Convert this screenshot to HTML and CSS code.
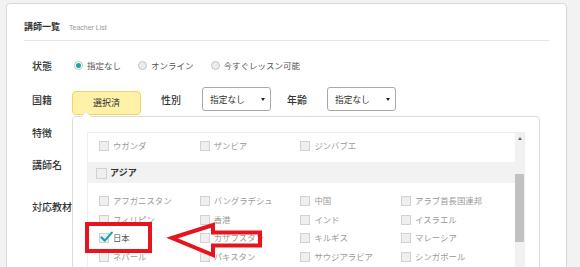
FILE: index.html
```html
<!DOCTYPE html>
<html lang="ja">
<head>
    <meta charset="UTF-8">
    <meta name="viewport" content="width=device-width, initial-scale=1.0">
    <title>講師一覧</title>
    <link rel="stylesheet" href="styles.css">
</head>
<body>
    <div class="card">
        <div class="card-head">
            <h1 class="card-title">講師一覧</h1>
            <span class="card-sub">Teacher List</span>
        </div>

        <div class="filters">
            <div class="filter-row row-status">
                <div class="filter-label">状態</div>
                <div class="filter-field">
                    <label class="radio"><span class="radio-dot checked"></span>指定なし</label>
                    <label class="radio"><span class="radio-dot"></span>オンライン</label>
                    <label class="radio"><span class="radio-dot"></span>今すぐレッスン可能</label>
                </div>
            </div>

            <div class="filter-row row-country">
                <div class="filter-label">国籍</div>
                <div class="filter-field">
                    <div class="country-picker">
                        <button type="button" class="picker-btn">選択済</button>

                        <!-- open dropdown -->
                        <div class="picker-panel">
                            <div class="country-list">
                                <div class="country-scroll">
                                    <div class="country-group group-tail">
                                        <label class="country"><span class="check"></span>ウガンダ</label>
                                        <label class="country"><span class="check"></span>ザンビア</label>
                                        <label class="country"><span class="check"></span>ジンバブエ</label>
                                    </div>

                                    <div class="group-head"><span class="check"></span>アジア</div>
                                    <div class="country-group">
                                        <label class="country"><span class="check"></span>アフガニスタン</label>
                                        <label class="country"><span class="check"></span>バングラデシュ</label>
                                        <label class="country"><span class="check"></span>中国</label>
                                        <label class="country"><span class="check"></span>アラブ首長国連邦</label>

                                        <label class="country"><span class="check"></span>フィリピン</label>
                                        <label class="country"><span class="check"></span>香港</label>
                                        <label class="country"><span class="check"></span>インド</label>
                                        <label class="country"><span class="check"></span>イスラエル</label>

                                        <label class="country selected">
                                            <span class="check">
                                                <svg class="tick" viewBox="0 0 13 12" width="13" height="12"><path d="M1.5 6.5 L4.8 9.6 L11.8 1.6" fill="none" stroke="#1c9fb3" stroke-width="2.2" stroke-linecap="round" stroke-linejoin="round"/></svg>
                                            </span>日本
                                        </label>
                                        <label class="country"><span class="check"></span>カザフスタン</label>
                                        <label class="country"><span class="check"></span>キルギス</label>
                                        <label class="country"><span class="check"></span>マレーシア</label>

                                        <label class="country"><span class="check"></span>ネパール</label>
                                        <label class="country"><span class="check"></span>パキスタン</label>
                                        <label class="country"><span class="check"></span>サウジアラビア</label>
                                        <label class="country"><span class="check"></span>シンガポール</label>
                                    </div>
                                </div>
                                <div class="scrollbar">
                                    <span class="scroll-up"></span>
                                    <span class="scroll-thumb"></span>
                                </div>
                            </div>
                        </div>
                    </div>

                    <span class="inline-label">性別</span>
                    <div class="select">指定なし<span class="caret"></span></div>

                    <span class="inline-label">年齢</span>
                    <div class="select">指定なし<span class="caret"></span></div>
                </div>
            </div>

            <div class="filter-row row-feature">
                <div class="filter-label">特徴</div>
            </div>

            <div class="filter-row row-name">
                <div class="filter-label">講師名</div>
            </div>

            <div class="filter-row row-text">
                <div class="filter-label">対応教材</div>
            </div>
        </div>
    </div>

    <!-- red annotation drawn on top of the screenshot -->
    <svg class="annotation" width="580" height="267" viewBox="0 0 580 267">
        <rect x="87" y="224" width="63" height="27" fill="none" stroke="#e8141d" stroke-width="4"/>
        <polygon points="172,238 213,225 213,232.5 260,232.5 260,245.5 213,245.5 213,255" fill="none" stroke="#e8141d" stroke-width="4" stroke-linejoin="miter"/>
    </svg>
</body>
</html>
```

FILE: styles.css
```css
html, body {
    height: 100%;
    overflow: hidden;
}
body {
    margin: 0;
    padding: 3px 13px 0 6px;
    background: #f2f2f2;
    font-family: "Noto Sans CJK JP", sans-serif;
    color: #333;
    position: relative;
}
.card {
    background: #fff;
    border: 1px solid #d9d9d9;
    border-radius: 4px;
    padding: 0 17px;
    min-height: 320px;
}
.card-head {
    display: flex;
    align-items: center;
    padding: 16px 0 6px;
    border-bottom: 1px solid #e6e6e6;
}
.card-title {
    margin: 0;
    font-size: 9px;
    line-height: 14px;
    font-weight: bold;
    color: #333;
}
.card-sub {
    margin-left: 9px;
    font-family: "Liberation Sans", Arial, sans-serif;
    font-size: 7px;
    color: #999;
}

/* filter rows */
.filters {
    display: flex;
    flex-direction: column;
    gap: 9px;
    padding: 11px 0 0 8px;
}
.filter-row {
    display: flex;
    align-items: center;
}
.row-status { height: 26px; }
.row-country { height: 24px; }
.row-feature { height: 24px; }
.row-name { height: 22px; }
.row-text { height: 44px; }
.filter-label {
    width: 40px;
    flex-shrink: 0;
    font-size: 10px;
    font-weight: 500;
    color: #333;
}
.filter-field {
    display: flex;
    align-items: center;
    height: 100%;
}

.radio {
    display: flex;
    align-items: center;
    margin-right: 17px;
    font-size: 8.5px;
    color: #555;
}
.radio:first-child {
    margin-left: 2px;
}
.radio-dot {
    width: 9px;
    height: 9px;
    box-sizing: border-box;
    border: 1px solid #c4c4c4;
    border-radius: 50%;
    background: #ececec;
    margin-right: 4px;
    position: relative;
}
.radio-dot.checked {
    background: #fff;
}
.radio-dot.checked::after {
    content: "";
    position: absolute;
    left: 1px;
    top: 1px;
    width: 5px;
    height: 5px;
    border-radius: 50%;
    background: #17a3ab;
}

/* country picker */
.country-picker {
    position: relative;
    height: 24px;
}
.picker-btn {
    width: 69px;
    height: 24px;
    padding: 0;
    background: #fff2a8;
    border: 1px solid #f1d467;
    border-radius: 4px;
    font-family: inherit;
    font-size: 9px;
    color: #333;
}
.inline-label {
    font-size: 10px;
    font-weight: 500;
    color: #333;
    margin: 0 21px 0 20px;
}
.inline-label:last-of-type {
    margin: 0 20px 0 16px;
}
.select {
    width: 69px;
    height: 24px;
    box-sizing: border-box;
    border: 1px solid #a9a9a9;
    border-radius: 3px;
    padding: 0 0 0 7px;
    display: flex;
    align-items: center;
    justify-content: space-between;
    font-size: 8.7px;
    color: #333;
}
.caret {
    width: 0;
    height: 0;
    border-left: 2.5px solid transparent;
    border-right: 2.5px solid transparent;
    border-top: 3.5px solid #222;
    margin-right: 5px;
}

.picker-panel {
    position: absolute;
    top: 29px;
    left: 0;
    width: 468px;
    height: 220px;
    box-sizing: border-box;
    padding: 15px 14px 0;
    background: #fff;
    border: 1px solid #dcdcdc;
    border-radius: 4px;
    z-index: 2;
}
.picker-panel::before,
.picker-panel::after {
    content: "";
    position: absolute;
    left: 7px;
    top: -6px;
    border-left: 6px solid transparent;
    border-right: 6px solid transparent;
    border-bottom: 6px solid #dcdcdc;
}
.picker-panel::after {
    left: 8px;
    top: -5px;
    border-left-width: 5px;
    border-right-width: 5px;
    border-bottom: 5px solid #fff;
}
.country-list {
    display: flex;
    height: 205px;
    border: 1px solid #eeeeee;
    overflow: hidden;
}
.country-scroll {
    flex: 1;
}
.country-group {
    display: grid;
    grid-template-columns: repeat(4, 100.7px);
    grid-auto-rows: 18.5px;
    padding: 8px 0 0 11px;
}
.group-tail {
    padding: 3px 0 7.5px 11px;
}
.group-head {
    display: flex;
    align-items: center;
    height: 21px;
    padding-left: 8px;
    background: #f2f2f2;
    font-size: 9px;
    font-weight: bold;
    color: #333;
}
.group-head .check {
    width: 11px;
    height: 11px;
    margin-right: 3px;
}
.country {
    display: flex;
    align-items: center;
    font-size: 8.4px;
    color: #999;
    white-space: nowrap;
}
.check {
    width: 10px;
    height: 10px;
    box-sizing: border-box;
    border: 1px solid #d2d2d2;
    background: #efefef;
    margin: 2px 4px 0 0;
    flex-shrink: 0;
    position: relative;
}
.country.selected {
    color: #555;
}
.tick {
    position: absolute;
    left: 0;
    top: -3px;
}
.scrollbar {
    width: 9px;
    background: #f1f1f1;
    display: flex;
    flex-direction: column;
    align-items: center;
}
.scroll-up {
    margin-top: 4px;
    width: 0;
    height: 0;
    border-left: 2.5px solid transparent;
    border-right: 2.5px solid transparent;
    border-bottom: 3px solid #666;
}
.scroll-thumb {
    margin-top: 34px;
    width: 9px;
    height: 68px;
    background: #c1c1c1;
}

.annotation {
    position: absolute;
    left: 0;
    top: 0;
    pointer-events: none;
    z-index: 5;
}
```
